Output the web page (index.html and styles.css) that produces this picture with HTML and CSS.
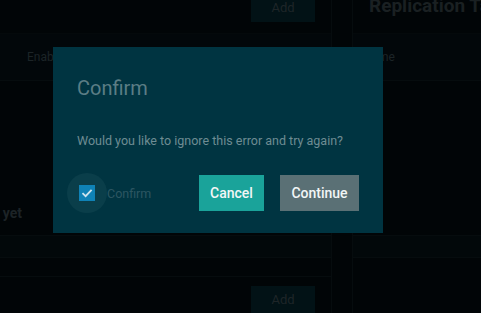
FILE: index.html
```html
<!DOCTYPE html>
<html lang="en">
<head>
    <meta charset="UTF-8">
    <meta name="viewport" content="width=device-width, initial-scale=1.0">
    <link rel="stylesheet" href="styles.css">
    <title>Replication</title>
</head>
<body>
    <div class="pagina">
        <div class="columna izquierda">
            <div class="barra">
                <button class="btn-add">Add</button>
            </div>
            <div class="cabecera">
                <span>Enabled</span>
            </div>
            <div class="vacio">
                <p>Nothing configured yet</p>
            </div>
            <div class="fila"></div>
            <div class="panel">
                <button class="btn-add">Add</button>
            </div>
        </div>
        <div class="columna derecha">
            <div class="barra">
                <h2>Replication Targets</h2>
            </div>
            <div class="cabecera">
                <span>Name</span>
            </div>
            <div class="vacio"></div>
            <div class="fila"></div>
        </div>
    </div>

    <!-- dialogo de confirmacion -->
    <div class="modal">
        <h3>Confirm</h3>
        <p class="mensaje">Would you like to ignore this error and try again?</p>
        <div class="pie">
            <label class="check">
                <span class="halo">
                    <span class="caja">
                        <svg width="12" height="10" viewBox="0 0 12 10"><path d="M1.5 5.2 L4.6 8.2 L10.6 1.8" fill="none" stroke="#cde4ee" stroke-width="1.8"/></svg>
                    </span>
                </span>
                Confirm
            </label>
            <button class="btn btn-cancel">Cancel</button>
            <button class="btn btn-continue">Continue</button>
        </div>
    </div>
</body>
</html>
```

FILE: styles.css
```css
* {
    padding: 0;
    margin: 0;
    box-sizing: border-box;
    font-family: Roboto, 'Liberation Sans', sans-serif;
}
body {
    background-color: #010507;
    width: 481px;
    height: 313px;
    overflow: hidden;
    position: relative;
}
.pagina {
    display: flex;
    gap: 20px;
    height: 313px;
}
.columna {
    display: flex;
    flex-direction: column;
}
.izquierda {
    width: 332px;
    flex-shrink: 0;
    border-right: 1px solid #060c0e;
}
.derecha {
    flex: 1;
    min-width: 0;
    overflow: hidden;
    border-left: 1px solid #060c0e;
}
.barra {
    height: 34px;
    flex-shrink: 0;
    display: flex;
    justify-content: flex-end;
    align-items: flex-start;
    padding-right: 16px;
    border-bottom: 1px solid #04090b;
}
.btn-add {
    width: 64px;
    height: 30px;
    margin-top: -8px;
    border: none;
    background-color: #021216;
    color: #1e2528;
    font-size: 13px;
}
.derecha .barra {
    justify-content: flex-start;
    padding-left: 16px;
}
h2 {
    font-size: 19px;
    font-weight: 700;
    color: #1a2022;
    white-space: nowrap;
    margin-top: -6px;
}
.cabecera {
    height: 47px;
    flex-shrink: 0;
    display: flex;
    align-items: center;
    padding-left: 27px;
    background-color: #02070a;
    border-bottom: 1px solid #060c0e;
    font-size: 12px;
    color: #1c2427;
}
.derecha .cabecera {
    padding-left: 10px;
}
.vacio {
    height: 154px;
    flex-shrink: 0;
    display: flex;
    align-items: flex-start;
    padding-top: 124px;
}
.vacio p {
    margin-left: -122px;
    font-size: 14px;
    font-weight: 700;
    color: #1c2326;
    white-space: nowrap;
}
.fila {
    height: 23px;
    flex-shrink: 0;
    background-color: #02080a;
    border-top: 1px solid #060c0e;
    border-bottom: 1px solid #060c0e;
}
.panel {
    margin-top: 18px;
    flex: 1;
    display: flex;
    justify-content: flex-end;
    align-items: flex-start;
    padding: 9px 16px 0 0;
    border-top: 1px solid #060c0e;
}
.panel .btn-add {
    margin-top: 0;
    height: 32px;
    padding-bottom: 6px;
}

.modal {
    position: absolute;
    left: 53px;
    top: 47px;
    width: 330px;
    height: 186px;
    background-color: #003441;
    padding: 27px 24px 0 24px;
}
.modal h3 {
    font-size: 20px;
    font-weight: 400;
    line-height: 28px;
    color: #5b7d85;
}
.mensaje {
    margin-top: 31px;
    font-size: 12.5px;
    color: #6e8c93;
}
.pie {
    margin-top: 25px;
    display: flex;
    align-items: center;
    gap: 16px;
}
.check {
    display: flex;
    align-items: center;
    margin-left: -10px;
    margin-right: auto;
    font-size: 12.5px;
    color: #2c5661;
}
.halo {
    width: 40px;
    height: 40px;
    border-radius: 50%;
    background-color: #0a3e4a;
    display: flex;
    align-items: center;
    justify-content: center;
}
.caja {
    width: 16px;
    height: 16px;
    background-color: #0f82b6;
    display: flex;
    align-items: center;
    justify-content: center;
}
.btn {
    height: 36px;
    border: none;
    font-size: 14px;
    font-weight: 500;
    color: #f2f6f6;
    padding: 0 11px;
}
.btn-cancel {
    width: 65px;
    background-color: #1aa39a;
}
.btn-continue {
    width: 79px;
    background-color: #5a7075;
}
```
